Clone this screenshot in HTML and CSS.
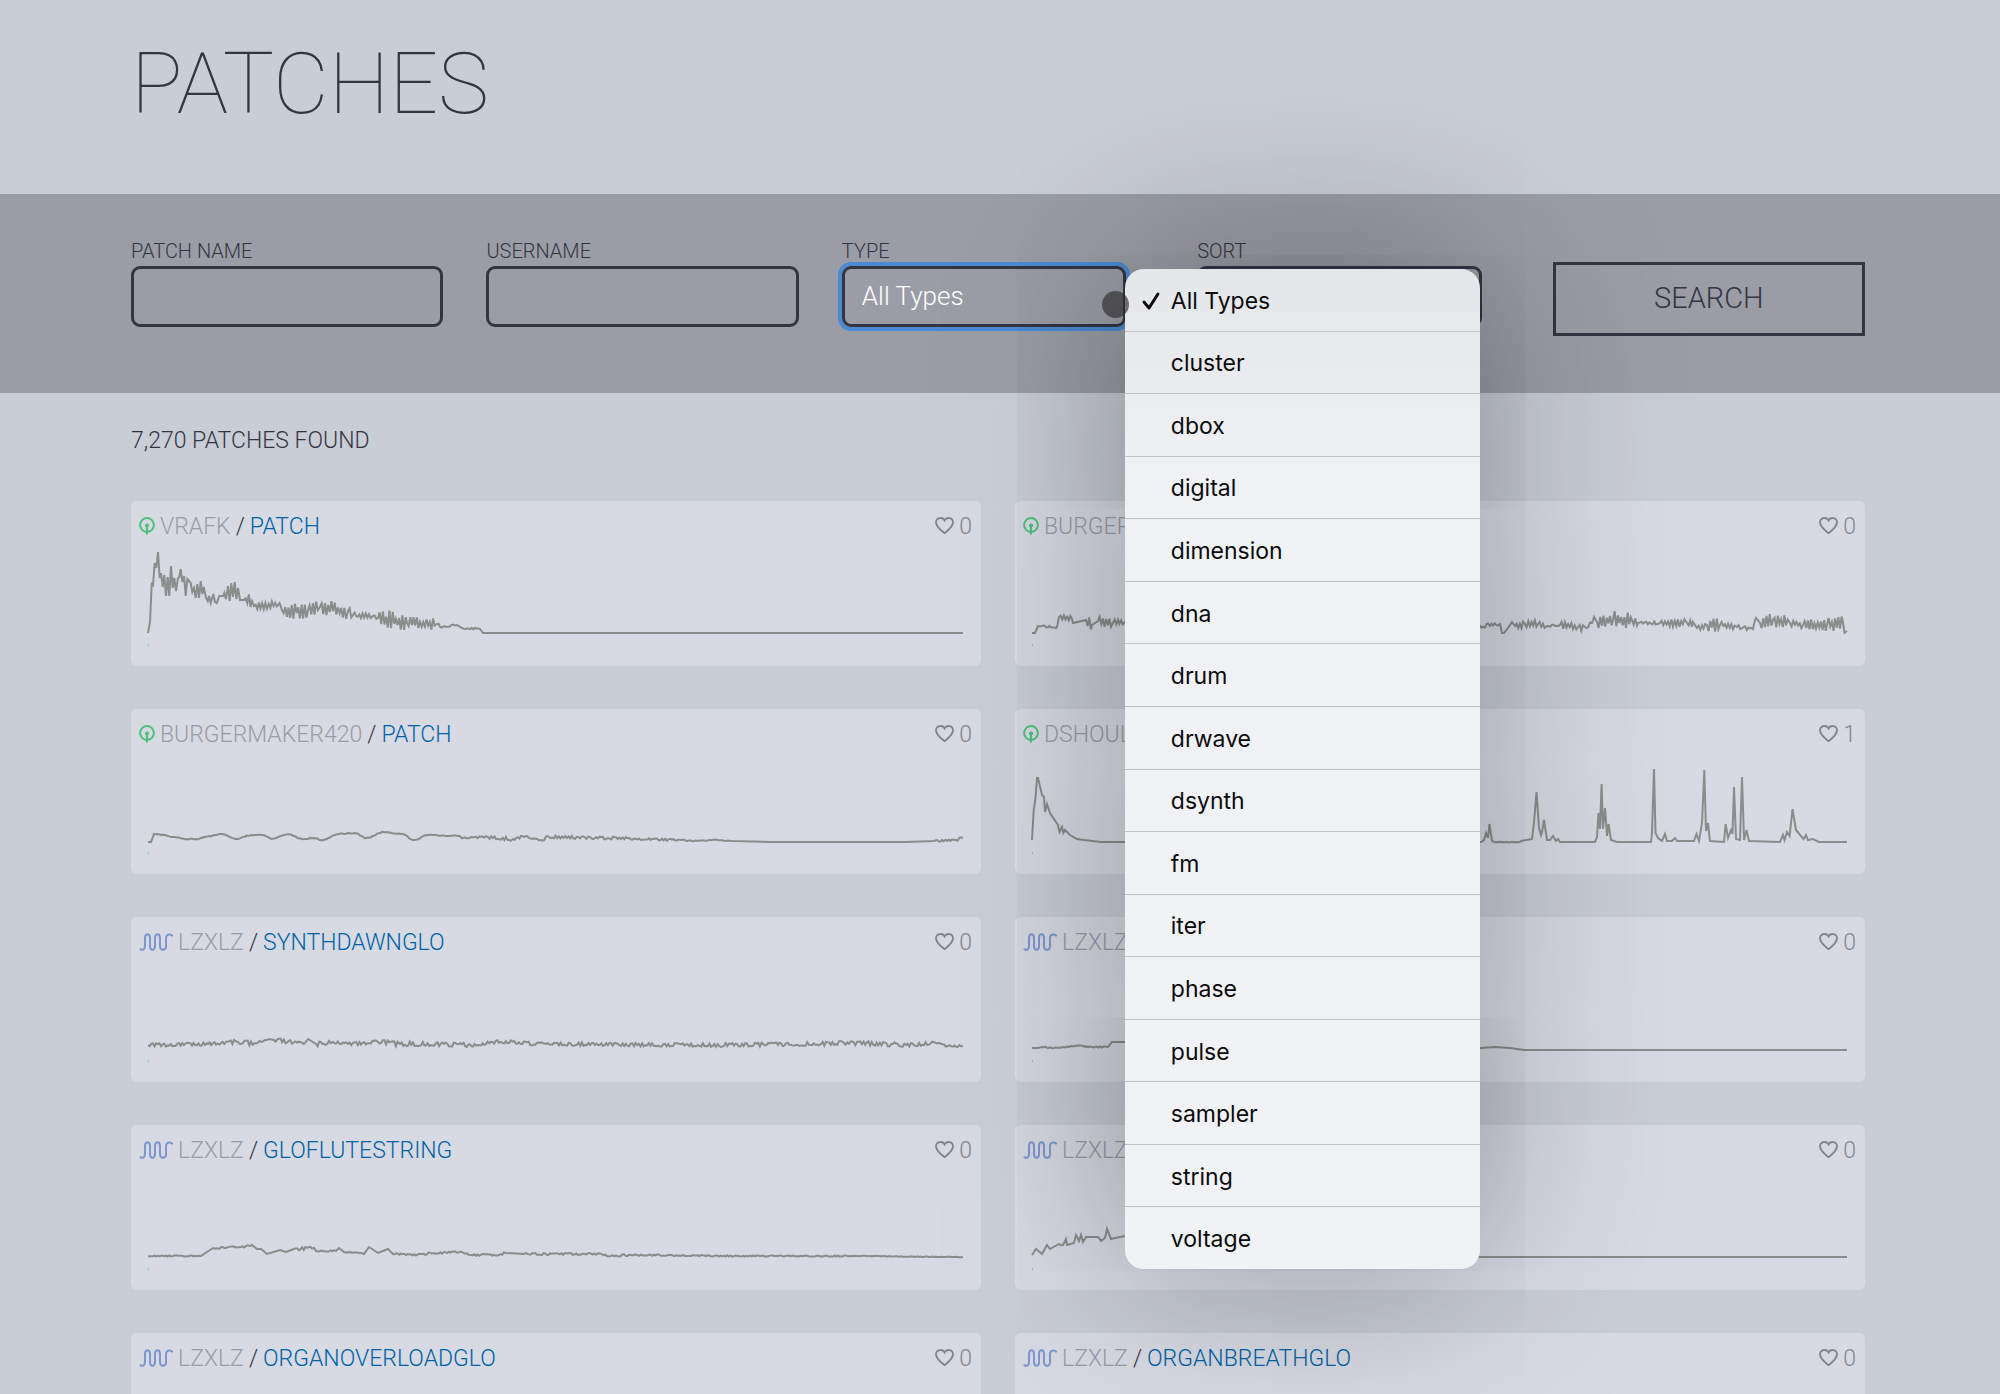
FILE: index.html
```html
<!DOCTYPE html>
<html lang="en">
<head>
<meta charset="utf-8">
<title>Patches</title>
<meta name="viewport" content="width=device-width, initial-scale=1">
<link rel="stylesheet" href="styles.css">
</head>
<body>
<svg class="sprite" aria-hidden="true">
  <symbol id="organelle" viewBox="0 0 16 18"><circle cx="8" cy="8" r="6.9"/><circle class="fill" cx="8" cy="8.500" r="1.100"/><path d="M8 8v9.500"/></symbol>
  <symbol id="wave" viewBox="0 0 34 18"><path d="M1 15.500c1 2 5 2 5-2.500V5c0-5 5-5 5 0v8c0 5 5 5 5 0V5c0-5 5-5 5 0v8c0 5 6 5 6 0V5c0-4.500 5.500-4.500 6.500-1.500"/></symbol>
  <symbol id="heart" viewBox="0 0 20 18"><path d="M10 17.200C6.500 14.500 1 10 1 5.600 1 .5 8 -.5 10 3.600 12 -.5 19 .5 19 5.600 19 10 13.500 14.500 10 17.200z"/></symbol>
</svg>

<header class="page-header">
  <h1>PATCHES</h1>
</header>

<form class="filters">
  <div class="field">
    <label for="name">PATCH NAME</label>
    <input id="name" type="text">
  </div>
  <div class="field">
    <label for="user">USERNAME</label>
    <input id="user" type="text">
  </div>
  <div class="field field-open">
    <label for="type">TYPE</label>
    <select id="type" class="is-focused"><option>All Types</option></select>
    <div class="menu" role="menu" aria-label="Type">
      <button type="button" role="menuitemradio" aria-checked="true"><svg class="check" viewBox="0 0 20 20" aria-hidden="true"><path d="M3 11l5 6L17 3"/></svg>All Types</button>
      <button type="button" role="menuitemradio">cluster</button>
      <button type="button" role="menuitemradio">dbox</button>
      <button type="button" role="menuitemradio">digital</button>
      <button type="button" role="menuitemradio">dimension</button>
      <button type="button" role="menuitemradio">dna</button>
      <button type="button" role="menuitemradio">drum</button>
      <button type="button" role="menuitemradio">drwave</button>
      <button type="button" role="menuitemradio">dsynth</button>
      <button type="button" role="menuitemradio">fm</button>
      <button type="button" role="menuitemradio">iter</button>
      <button type="button" role="menuitemradio">phase</button>
      <button type="button" role="menuitemradio">pulse</button>
      <button type="button" role="menuitemradio">sampler</button>
      <button type="button" role="menuitemradio">string</button>
      <button type="button" role="menuitemradio">voltage</button>
    </div>
    <span class="pointer"></span>
  </div>
  <div class="field">
    <label for="sort">SORT</label>
    <select id="sort"><option></option></select>
  </div>
  <button class="search" type="submit">SEARCH</button>
</form>

<main class="results">
  <p class="count">7,270 PATCHES FOUND</p>
  <div class="grid">
    <article class="card">
      <header><svg class="icon green"><use href="#organelle"/></svg><a class="user" href="#">VRAFK</a><span>/</span><a class="patch" href="#">PATCH</a><button class="like" type="button"><svg class="heart"><use href="#heart"/></svg>0</button></header>
      <svg class="plot" viewBox="0 0 815 110" data-keys="0,93 2,82 3.7,44 5,45 6.7,23 8.3,28 10,12 11.7,38 13,33 14.7,47 16.3,35 18,56 19.7,37 21.3,56 23,26 24.7,48 26.3,38 28,51 30,38 31.3,37 32.7,29 34.3,42 36,36 37.7,56 39.3,39 42.7,43 44.3,52 46,48 47.7,58 49.3,44 51,58 52.7,41 54.3,54 55.7,47 58,58 59.7,61 61,56 62.7,63 65.3,54 67,62 68.7,63 71.3,56 75.3,56 76.3,53 78,59 80,46 81.7,61 83.3,43 85,57 86.7,42 88.3,59 90,48 92,60 96,60,7 104,61,5 106,66,4 130,65,6 134,70,9 160,70,7 172,67,9 200,71,8 205,75,5 208,76,3 225,76,3 230,78,9 259,83,6 289,84,3 292,87,1 309,85 314,88,1 332,89 335,93 815,93"></svg>
    </article>
    <article class="card">
      <header><svg class="icon green"><use href="#organelle"/></svg><a class="user" href="#">BURGER</a><button class="like" type="button"><svg class="heart"><use href="#heart"/></svg>0</button></header>
      <svg class="plot" viewBox="0 0 815 110" data-keys="0,93 3,93 6,86,1 25,87,2 27,77,3 40,79,5 41,83 54,80,7 60,85 66,81,6 81,83,4 93,82,3 448,86,2 468,84,1 470,93 472,93 476,88 480,82 483,86,4 493,84,4 506,84,4 515,86,1 528,85,4 546,87,4 553,87,2 560,83 562,77 565,82,7 581,80,9 600,80,8 606,83,1.500 628,83,4 655,83,6 661,82 665,88,4 675,85,7 688,85,3 705,87,2 721,89,2 724,78 728,83,7 741,80,8 758,83,4 771,85,6 795,85,7 811,83,8 815,91"></svg>
    </article>
    <article class="card">
      <header><svg class="icon green"><use href="#organelle"/></svg><a class="user" href="#">BURGERMAKER420</a><span>/</span><a class="patch" href="#">PATCH</a><button class="like" type="button"><svg class="heart"><use href="#heart"/></svg>0</button></header>
      <svg class="plot" viewBox="0 0 815 110" data-keys="0,94 3,94 6,86,.4 17,87,.4 25,89,.4 39,91,.4 48,91,.4 62,88,.4 74,86,.4 87,91,.4 104,87,.4 115,87,.4 124,91,.4 140,86,.4 154,91,.4 166,90,.4 174,92,.4 191,86,.4 207,85,.4 218,90,.4 236,84,.4 253,86,.4 267,92,.4 278,87,.4 309,88,.6 315,90,1 340,89,2 365,91,1.5 376,89,1 393,92,2 401,89,1.500 460,90,1.5 488,91,1 533,92,.6 544,93,.4 570,92,.4 584,93 623,94 701,94 758,94 786,93,1 808,92,1.5 815,90"></svg>
    </article>
    <article class="card">
      <header><svg class="icon green"><use href="#organelle"/></svg><a class="user" href="#">DSHOUL</a><button class="like" type="button"><svg class="heart"><use href="#heart"/></svg>1</button></header>
      <svg class="plot" viewBox="0 0 815 110" data-keys="0,92 1.7,62 3.4,51 5,30 6,30 10,47 12,49 13,64 15,56 18,65 26,77 27.5,84 30,79 31.4,85 33,82 38,87 45,91 52,92 69,94 92,94 449,94 452,92 454,85 456,90 457.5,76 460,93 462,94,.4 484,94,.4 500,91 502,75 504.5,44 507,80 509,87 510,84 512,72 515,92 518,92 521,88 524,93 526,91 528,94 563,94 565,89 566.5,65 568,81 569.6,36 571,81 573,60 575,88 576.5,76 579,92 585,94 619,94 620,85 622,21 623.5,85 626,90 630,93 633,86 635,93 640,93 643,90 645,93 662,93 664.5,86 667,93 670,75 672.3,22 674,83 676,75 678,93 692,94 693.6,76 696,90 699,82 700.5,86 702,39 704,91 708,92 710,29 712,92 714.5,82 717,93 748,94 751,87 752.5,92 755,84 757.6,88 760.5,61 764,82 769,88 771.6,91 774,87 776,92 781,91 787,94 815,94"></svg>
    </article>
    <article class="card">
      <header><svg class="icon wave"><use href="#wave"/></svg><a class="user" href="#">LZXLZ</a><span>/</span><a class="patch" href="#">SYNTHDAWNGLO</a><button class="like" type="button"><svg class="heart"><use href="#heart"/></svg>0</button></header>
      <svg class="plot" viewBox="0 0 815 110" data-keys="0,89,1.8 60,88,1.8 73,87,2.4 90,86,2.4 107,87,1 121,83 126,84,2 146,86,1 157,87 160,83 168,88,2.4 185,86,2.4 200,88,1.8 230,86,2.4 252,88,2.4 320,89,1.8 353,86,2 398,88,1.8 550,89,2 673,88,2.4 696,87,2.4 758,89,1.8 788,87,1 800,90,1 815,90"></svg>
    </article>
    <article class="card">
      <header><svg class="icon wave"><use href="#wave"/></svg><a class="user" href="#">LZXLZ</a><button class="like" type="button"><svg class="heart"><use href="#heart"/></svg>0</button></header>
      <svg class="plot" viewBox="0 0 815 110" data-keys="0,92 6,92 10,91,.5 22,92,.5 46,90,.8 60,91,.6 76,91 80,86 93,86 449,92 463,91 478,92 492,94 815,94"></svg>
    </article>
    <article class="card">
      <header><svg class="icon wave"><use href="#wave"/></svg><a class="user" href="#">LZXLZ</a><span>/</span><a class="patch" href="#">GLOFLUTESTRING</a><button class="like" type="button"><svg class="heart"><use href="#heart"/></svg>0</button></header>
      <svg class="plot" viewBox="0 0 815 110" data-keys="0,92,.5 53,92 65,84,.8 93,83,.8 102,82 104,81 109,85 113,85 119,90 132,86 138,88 146,85,1.5 166,84,1 168,87,.6 188,87 191,84 196,88,.6 213,89 216,90 221,83 230,89 240,85 245,90,.8 269,91,1 286,89,1 314,88,1 323,91,1 351,91,1 358,89 376,90,1 449,90,1 463,92,1 483,91,.7 589,92,.6 701,92,.3 815,93"></svg>
    </article>
    <article class="card">
      <header><svg class="icon wave"><use href="#wave"/></svg><a class="user" href="#">LZXLZ</a><button class="like" type="button"><svg class="heart"><use href="#heart"/></svg>0</button></header>
      <svg class="plot" viewBox="0 0 815 110" data-keys="0,91 4,85 10,90 15,81 18,85 27,80,1 31,81 34,75 35,81 42,79 44,71 47,77 49,71 51,78 54,73 65,73,2 69,77 73,74 75,65 79,75 83,74 93,72 300,93 815,93"></svg>
    </article>
    <article class="card">
      <header><svg class="icon wave"><use href="#wave"/></svg><a class="user" href="#">LZXLZ</a><span>/</span><a class="patch" href="#">ORGANOVERLOADGLO</a><button class="like" type="button"><svg class="heart"><use href="#heart"/></svg>0</button></header>
    </article>
    <article class="card">
      <header><svg class="icon wave"><use href="#wave"/></svg><a class="user" href="#">LZXLZ</a><span>/</span><a class="patch" href="#">ORGANBREATHGLO</a><button class="like" type="button"><svg class="heart"><use href="#heart"/></svg>0</button></header>
    </article>
  </div>
</main>
<script src="plots.js"></script>
</body>
</html>
```
FILE: styles.css
```css
* { box-sizing: border-box; }
body {
  margin: 0;
  height: 100vh;
  overflow: hidden;
  background: #c9cdd6;
  color: #343543;
  font-family: Roboto, "Liberation Sans", sans-serif;
  font-weight: 300;
}
button, input, select { font: inherit; color: inherit; margin: 0; }
a { text-decoration: none; }
.sprite { display: none; }
svg { fill: none; stroke: currentColor; }

.page-header { padding: 34px 131px 60px; }
h1 { margin: 0; font-size: 86px; line-height: 100px; font-weight: 100; }

.filters {
  display: grid;
  grid-template-columns: repeat(5, 1fr);
  column-gap: 43px;
  align-items: start;
  padding: 45px 135px 57px 131px;
  background: #9b9da6;
}
.field { position: relative; display: flex; flex-direction: column; gap: 3px; }
.field label { font-size: 20px; line-height: 24px; }
.field input, .field select {
  height: 61px;
  padding: 0 17px;
  border: 3px solid #343543;
  border-radius: 9px;
  background: transparent;
  outline: 0;
}
.field select {
  appearance: none;
  margin-right: 28px;
  padding-bottom: 2px;
  color: #fff;
  font-size: 26px;
}
.field .is-focused { box-shadow: 0 0 0 4px #4a8ad4; }
.search {
  height: 74px;
  margin-top: 23px;
  padding-bottom: 4px;
  border: 3px solid #343543;
  background: transparent;
  font-size: 29px;
}

/* Open list of types */
.field-open { z-index: 2; }
.menu {
  position: absolute;
  top: 30px;
  left: 283px;
  display: flex;
  flex-direction: column;
  width: 355px;
  height: 1000px;
  border-radius: 19px;
  overflow: hidden;
  background: linear-gradient(#e5e6ea, #e9eaed 90px, #f0f1f5 200px, #f1f2f6);
  box-shadow: 0 0 190px rgba(0, 0, 0, .36);
}
.menu button {
  position: relative;
  flex: 1;
  padding: 2px 46px 0;
  border: 0;
  border-bottom: 1px solid #bfc1c6;
  background: none;
  color: #0b0b0c;
  font: 400 23px Inter, "Liberation Sans", sans-serif;
  text-align: left;
}
.menu button:last-child { border-bottom: 0; }
.check { position: absolute; left: 16px; top: 22px; width: 20px; height: 20px; stroke-width: 3; stroke-linecap: round; stroke-linejoin: round; }
.pointer {
  position: absolute;
  top: 52px;
  left: 260px;
  width: 27px;
  height: 27px;
  border-radius: 50%;
  background: rgba(44, 44, 46, .65);
}

.results { padding: 32px 135px 40px 131px; }
.count { margin: 0; padding: 1px 0 45px; font-size: 23px; line-height: 30px; }
.grid { display: grid; grid-template-columns: 1fr 1fr; gap: 43px 34px; }
.card { height: 165px; padding: 10px 9px 9px 8px; border-radius: 6px; background: #d7dae3; }
.card header { display: flex; align-items: center; gap: 5px; height: 30px; font-size: 23px; }
.card .patch { color: #0062a6; }
.user { color: #9a9ca5; }
.icon { width: 16px; height: 18px; stroke-width: 2; }
.icon .fill { fill: currentColor; }
.green { color: #4fc07a; }
.icon.wave { width: 34px; height: 18px; stroke-width: 2; color: #8096cf; }
.like { display: flex; align-items: center; gap: 5px; margin-left: auto; padding: 0; border: 0; background: none; color: #83858e; }
.heart { width: 19px; height: 17px; margin-bottom: 2px; stroke-width: 2; }
.plot { display: block; margin: -1px 9px 0; color: #8b8c8c; stroke-width: 2; overflow: visible; }
.plot .tick { color: #3cae70; stroke-width: 1; }
```
FILE: plots.js
```js
// Each key is "x,y" with an optional jitter height that holds until the next key.
document.querySelectorAll('.plot').forEach(function (svg, n) {
  var seed = 17 + n * 31;
  function rand() { seed = (seed * 16807) % 2147483647; return seed / 2147483647; }
  var keys = svg.dataset.keys.split(' ').map(function (k) { return k.split(',').map(Number); });
  var pts = [], sign = 1;
  keys.forEach(function (k, i) {
    pts.push(k[0] + ',' + k[1]);
    var next = keys[i + 1], amp = k[2] || 0;
    if (!next || !amp) return;
    for (var x = k[0] + 1.63; x < next[0] - 1; x += 1.63) {
      var t = (x - k[0]) / (next[0] - k[0]);
      var ease = (1 - Math.cos(Math.PI * t)) / 2;
      if (amp > 2.5 || rand() > 0.5) sign = -sign;
      var y = k[1] + (next[1] - k[1]) * ease + sign * amp * (0.25 + 0.75 * rand());
      pts.push(x.toFixed(1) + ',' + y.toFixed(1));
    }
  });
  svg.innerHTML = '<polyline points="' + pts.join(' ') + '"/><path class="tick" d="M0 105h1"/>';
});
```
